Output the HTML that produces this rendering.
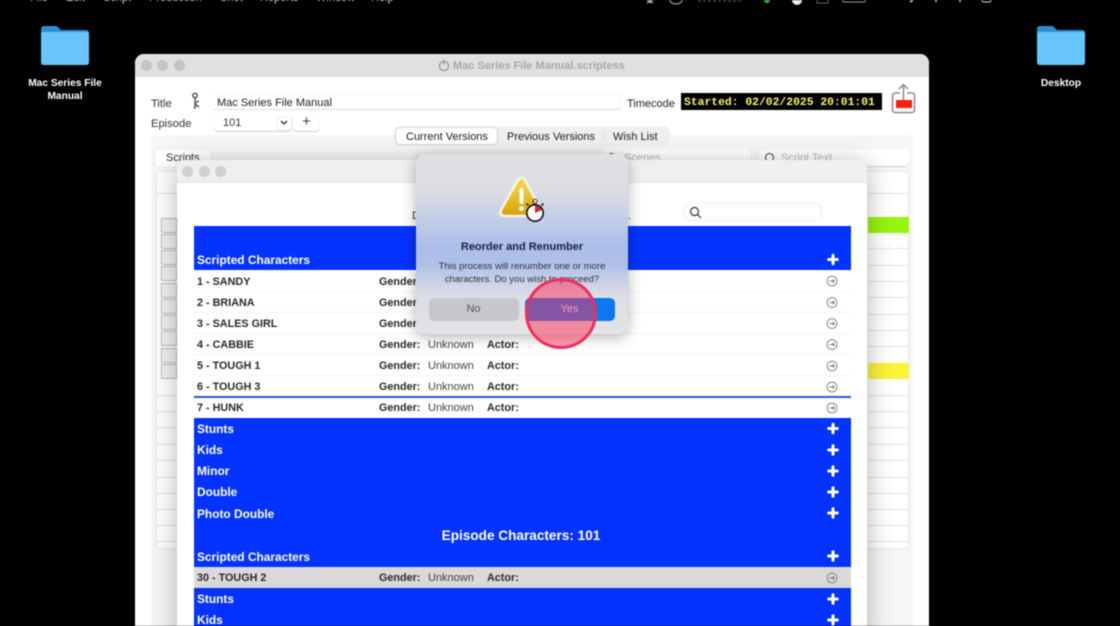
<!DOCTYPE html>
<html><head><meta charset="utf-8">
<style>
*{box-sizing:border-box}
html,body{margin:0;padding:0;width:1120px;height:626px;overflow:hidden;background:#000;font-family:"Liberation Sans",sans-serif;color:#222}
#w{position:absolute;left:0;top:0;width:1120px;height:626px;overflow:hidden;filter:blur(.45px)}
.a{position:absolute}
.t{position:absolute;white-space:nowrap;line-height:14px}
.dot{position:absolute;width:11px;height:11px;border-radius:50%}
.lbl{color:#fff;font-weight:bold;font-size:10.2px;text-align:center;line-height:13px}
.bk{font-weight:bold;font-size:10.8px;color:#2a2a2a}
.wb{font-weight:bold;font-size:11.9px;color:#fff}
.un{font-size:11px;color:#444}
.br{position:absolute;left:157px;width:20px;height:1px;background:#e2e2e2}
.r{position:absolute;left:868px;width:41px;height:1px;background:#e2e2e2}
.cb{position:absolute;left:161px;width:16px;height:15px;border:1px solid #bbb;background:#f0f0f0}
.m{position:absolute;top:-9px;font-size:11px;color:#ddd;line-height:14px;white-space:nowrap}
</style></head><body><div id="w">
<div class="m" style="left:30px">File</div><div class="m" style="left:66px">Edit</div><div class="m" style="left:103px">Script</div><div class="m" style="left:149px">Production</div><div class="m" style="left:220px">Shot</div><div class="m" style="left:260px">Reports</div><div class="m" style="left:316px">Window</div><div class="m" style="left:371px">Help</div>
<svg class="a" style="left:640px;top:0" width="370" height="5" viewBox="0 0 370 5" fill="none"><path d="M10 0V3M7 0L13 3M13 0L7 3" stroke="#ddd"/><path d="M30 0A6 4 0 0 0 42 0" stroke="#bbb"/><path d="M58 1H102" stroke="#666" stroke-dasharray="3 2"/><circle cx="127" cy="0" r="3" fill="#3b3"/><circle cx="157" cy="0" r="5" fill="#eee"/><rect x="177" y="-3" width="11" height="6" fill="none" stroke="#666"/><rect x="203" y="-3" width="22" height="5" rx="1" stroke="#999"/><path d="M270 2L273 0M296 2V0M320 2V0" stroke="#ddd" stroke-width="1.500"/><rect x="342" y="-3" width="9" height="5" rx="2" stroke="#ddd"/></svg>
<svg class="a" style="left:41px;top:25px" width="48" height="41" viewBox="0 0 48 41"><path d="M0 4Q0 1 3 1H14Q16 1 18 3L20 5H45Q48 5 48 8V20H0Z" fill="#2a8fd2"/><path d="M0 9Q0 7 3 7H45Q48 7 48 9V37Q48 40 45 40H3Q0 40 0 37Z" fill="#68c5fa"/></svg>
<div class="a lbl" style="left:20px;top:77px;width:90px">Mac Series File<br>Manual</div>
<svg class="a" style="left:1037px;top:25px" width="48" height="41" viewBox="0 0 48 41"><path d="M0 4Q0 1 3 1H14Q16 1 18 3L20 5H45Q48 5 48 8V20H0Z" fill="#2a8fd2"/><path d="M0 9Q0 7 3 7H45Q48 7 48 9V37Q48 40 45 40H3Q0 40 0 37Z" fill="#68c5fa"/></svg>
<div class="a lbl" style="left:1021px;top:77px;width:80px">Desktop</div>
<div class="a" style="left:135px;top:54px;width:794px;height:572px;background:#fff;border-radius:9px 9px 0 0;overflow:hidden">
  <div class="a" style="left:0;top:0;width:794px;height:23px;background:#e0e0e0"></div>
</div>
<div class="dot" style="left:141px;top:60px;background:#c4c4c4"></div>
<div class="dot" style="left:157px;top:60px;background:#c4c4c4"></div>
<div class="dot" style="left:174px;top:60px;background:#c4c4c4"></div>
<svg class="a" style="left:438px;top:58px" width="12" height="14" viewBox="0 0 12 14" fill="none" stroke="#999" stroke-width="1.300"><circle cx="6" cy="8" r="4.600"/><path d="M5 1.500L6 3.500V7"/></svg>
<div class="t" style="left:453px;top:59px;font-weight:bold;font-size:11px;color:#a8a8a8">Mac Series File Manual.scriptess</div>
<div class="t" style="left:151px;top:97px;font-size:11.2px;color:#333">Title</div>
<div class="t" style="left:151px;top:117px;font-size:11.2px;color:#333">Episode</div>
<svg class="a" style="left:191px;top:92px" width="10" height="18" viewBox="0 0 10 18" fill="none" stroke="#555" stroke-width="1.500"><circle cx="4" cy="3.500" r="2.200"/><path d="M4 6V17M4 11L8 9M4 12L8 15"/></svg>
<div class="a" style="left:214px;top:94px;width:406px;height:16px;border-bottom:1px solid #ddd;border-right:1px solid #f0f0f0;border-top:1px solid #f6f6f6"></div>
<div class="t" style="left:217px;top:96px;font-size:11px;color:#222">Mac Series File Manual</div>
<div class="t" style="left:627px;top:97px;font-size:11px;color:#222">Timecode</div>
<div class="a" style="left:681px;top:93px;width:201px;height:17px;background:#000"></div>
<div class="t" style="left:684px;top:96px;font-family:'Liberation Mono',monospace;font-weight:bold;font-size:11.37px;color:#fdf75a">Started: 02/02/2025 20:01:01</div>
<svg class="a" style="left:891px;top:83px" width="25" height="31" viewBox="0 0 25 31" fill="none"><rect x="1.500" y="10" width="22" height="19.500" rx="2.500" stroke="#8a8a8a" stroke-width="1.500"/><rect x="5" y="17" width="16" height="8" fill="#f6200c"/><rect x="9" y="6" width="7" height="6" fill="#fff"/><path d="M12.500 17V1.500M8 6L12.500 1.500L17 6" stroke="#8a8a8a" stroke-width="1.500"/></svg>
<div class="a" style="left:214px;top:114px;width:78px;height:17px;background:#fff;border-radius:4px;box-shadow:0 1px 1px rgba(0,0,0,.2)"></div>
<div class="t" style="left:223px;top:116px;font-size:11px;color:#333">101</div>
<div class="a" style="left:277px;top:117px;width:14px;height:13px;background:#fff;border-radius:3px;box-shadow:0 0 1px rgba(0,0,0,.4)"></div>
<svg class="a" style="left:280px;top:120px" width="8" height="6" viewBox="0 0 8 6" fill="none" stroke="#333" stroke-width="1.300"><path d="M1 1L4 4L7 1"/></svg>
<div class="a" style="left:293px;top:114px;width:26px;height:17px;background:#fff;border-radius:4px;box-shadow:0 1px 1px rgba(0,0,0,.2)"></div>
<div class="t" style="left:302px;top:115px;font-size:15px;color:#444">+</div>
<div class="a" style="left:151px;top:135px;width:762px;height:491px;background:#f6f6f6;border-radius:5px 5px 0 0"></div>
<div class="a" style="left:395px;top:127px;width:274px;height:18px;background:#efefef;border-radius:5px;box-shadow:0 0 1px rgba(0,0,0,.2)"></div>
<div class="a" style="left:396px;top:128px;width:101px;height:16px;background:#fff;border-radius:4px;box-shadow:0 0 2px rgba(0,0,0,.3)"></div>
<div class="t" style="left:406px;top:130px;font-size:11px;color:#222">Current Versions</div>
<div class="t" style="left:507px;top:130px;font-size:11px;color:#222">Previous Versions</div>
<div class="a" style="left:603px;top:131px;width:1px;height:10px;background:#ddd"></div>
<div class="t" style="left:613px;top:130px;font-size:11px;color:#222">Wish List</div>
<div class="a" style="left:155px;top:149px;width:56px;height:18px;background:#fff;border-radius:4px;box-shadow:0 0 1px rgba(0,0,0,.3)"></div>
<div class="t" style="left:166px;top:151px;font-size:11px;color:#333">Scripts</div>
<div class="a" style="left:602px;top:149px;width:149px;height:17px;background:#fff;border-radius:4px;box-shadow:0 1px 1px rgba(0,0,0,.15)"></div>
<div class="t" style="left:624px;top:151px;font-size:11px;color:#bbb">Scenes</div>
<div class="a" style="left:759px;top:149px;width:150px;height:17px;background:#fff;border-radius:4px;box-shadow:0 1px 1px rgba(0,0,0,.15)"></div>
<div class="t" style="left:781px;top:151px;font-size:11px;color:#bbb">Script Text</div>
<svg class="a" style="left:764px;top:152px" width="12" height="12" viewBox="0 0 12 12" fill="none" stroke="#444" stroke-width="1.100"><circle cx="5.500" cy="5.500" r="4"/></svg>
<svg class="a" style="left:606px;top:152px" width="12" height="12" viewBox="0 0 12 12" fill="none" stroke="#444" stroke-width="1.100"><circle cx="5.500" cy="5.500" r="4"/></svg>
<div class="a" style="left:156px;top:171px;width:753px;height:378px;background:#fff;border:1px solid #e6e6e6"></div>
<div class="br" style="top:193px"></div><div class="br" style="top:395px"></div><div class="br" style="top:411px"></div><div class="br" style="top:427px"></div><div class="br" style="top:444px"></div><div class="br" style="top:460px"></div><div class="br" style="top:477px"></div><div class="br" style="top:493px"></div><div class="br" style="top:509px"></div><div class="br" style="top:525px"></div><div class="br" style="top:541px"></div>
<div class="cb" style="top:218px"></div><div class="cb" style="top:234px"></div><div class="cb" style="top:250px"></div><div class="cb" style="top:266px"></div><div class="cb" style="top:283px"></div><div class="cb" style="top:299px"></div><div class="cb" style="top:315px"></div><div class="cb" style="top:331px"></div><div class="cb" style="top:348px"></div><div class="cb" style="top:364px"></div>
<div class="r" style="top:193px"></div><div class="r" style="top:248px"></div><div class="r" style="top:265px"></div><div class="r" style="top:281px"></div><div class="r" style="top:297px"></div><div class="r" style="top:314px"></div><div class="r" style="top:330px"></div><div class="r" style="top:346px"></div><div class="r" style="top:395px"></div><div class="r" style="top:411px"></div><div class="r" style="top:427px"></div><div class="r" style="top:444px"></div><div class="r" style="top:460px"></div><div class="r" style="top:477px"></div><div class="r" style="top:493px"></div><div class="r" style="top:509px"></div><div class="r" style="top:525px"></div><div class="r" style="top:541px"></div>
<div class="a" style="left:868px;top:217px;width:41px;height:16px;background:#97f50c"></div>
<div class="a" style="left:868px;top:363px;width:41px;height:16px;background:#f9f33a"></div>
<div class="a" style="left:177px;top:160px;width:690px;height:480px;background:#fff;border-radius:8px 8px 0 0;box-shadow:0 4px 26px rgba(0,0,0,.3)">
  <div class="a" style="left:0;top:0;width:690px;height:23px;background:#efefef;border-radius:8px 8px 0 0;border-bottom:1px solid #e4e4e4"></div>
</div>
<div class="dot" style="left:182px;top:166px;background:#cfcfcf"></div>
<div class="dot" style="left:199px;top:166px;background:#cfcfcf"></div>
<div class="dot" style="left:215px;top:166px;background:#cfcfcf"></div>
<div class="t" style="left:412px;top:209px;font-size:11px;color:#333">D</div>
<div class="t" style="left:628px;top:209px;font-size:11px;color:#333">.</div>
<div class="a" style="left:685px;top:204px;width:136px;height:16px;background:#fff;border-radius:5px;box-shadow:0 0 2px rgba(0,0,0,.2)"></div>
<svg class="a" style="left:689px;top:206px" width="13" height="13" viewBox="0 0 13 13" fill="none" stroke="#333" stroke-width="1.200"><circle cx="5.500" cy="5.500" r="4"/><path d="M8.500 8.500L12 12"/></svg>
<div class="a" style="left:194px;top:226px;width:657px;height:44px;background:#0433ff"></div>
<div class="a" style="left:194px;top:396px;width:657px;height:2px;background:#1c5fd0"></div>
<div class="a" style="left:194px;top:418px;width:657px;height:149px;background:#0433ff"></div>
<div class="a" style="left:194px;top:567px;width:657px;height:21px;background:#d9d9d9"></div>
<div class="a" style="left:194px;top:588px;width:657px;height:38px;background:#0433ff"></div>
<div class="a" style="left:194px;top:291px;width:657px;border-top:1px dotted #e8e8e8"></div>
<div class="a" style="left:194px;top:312px;width:657px;border-top:1px dotted #e8e8e8"></div>
<div class="a" style="left:194px;top:333px;width:657px;border-top:1px dotted #e8e8e8"></div>
<div class="a" style="left:194px;top:354px;width:657px;border-top:1px dotted #e8e8e8"></div>
<div class="a" style="left:194px;top:375px;width:657px;border-top:1px dotted #e8e8e8"></div>
<div class="t wb" style="left:197px;top:253px">Scripted Characters</div>
<div class="t bk" style="left:197px;top:275px">1 - SANDY</div>
<div class="t bk" style="left:197px;top:296px">2 - BRIANA</div>
<div class="t bk" style="left:197px;top:317px">3 - SALES GIRL</div>
<div class="t bk" style="left:197px;top:338px">4 - CABBIE</div>
<div class="t bk" style="left:197px;top:359px">5 - TOUGH 1</div>
<div class="t bk" style="left:197px;top:380px">6 - TOUGH 3</div>
<div class="t bk" style="left:197px;top:401px">7 - HUNK</div>
<div class="t bk" style="left:379px;top:275px">Gender:</div>
<div class="t bk" style="left:379px;top:296px">Gender:</div>
<div class="t bk" style="left:379px;top:317px">Gender:</div>
<div class="t bk" style="left:379px;top:338px">Gender:</div>
<div class="t bk" style="left:379px;top:359px">Gender:</div>
<div class="t bk" style="left:379px;top:380px">Gender:</div>
<div class="t bk" style="left:379px;top:401px">Gender:</div>
<div class="t un" style="left:428px;top:338px">Unknown</div>
<div class="t un" style="left:428px;top:359px">Unknown</div>
<div class="t un" style="left:428px;top:380px">Unknown</div>
<div class="t un" style="left:428px;top:401px">Unknown</div>
<div class="t bk" style="left:487px;top:338px">Actor:</div>
<div class="t bk" style="left:487px;top:359px">Actor:</div>
<div class="t bk" style="left:487px;top:380px">Actor:</div>
<div class="t bk" style="left:487px;top:401px">Actor:</div>
<div class="t wb" style="left:197px;top:422px">Stunts</div>
<div class="t wb" style="left:197px;top:443px">Kids</div>
<div class="t wb" style="left:197px;top:464px">Minor</div>
<div class="t wb" style="left:197px;top:485px">Double</div>
<div class="t wb" style="left:197px;top:507px">Photo Double</div>
<div class="t" style="left:194px;top:529px;width:654px;text-align:center;font-weight:bold;font-size:13.6px;color:#fff">Episode Characters: 101</div>
<div class="t wb" style="left:197px;top:550px">Scripted Characters</div>
<div class="t bk" style="left:197px;top:571px">30 - TOUGH 2</div>
<div class="t bk" style="left:379px;top:571px">Gender:</div>
<div class="t un" style="left:428px;top:571px">Unknown</div>
<div class="t bk" style="left:487px;top:571px">Actor:</div>
<div class="t wb" style="left:197px;top:592px">Stunts</div>
<div class="t wb" style="left:197px;top:613px">Kids</div>
<svg class="a" style="left:0;top:0" width="1120" height="626" fill="none">
<defs><g id="p"><path d="M0-4.300V4.300M-4.300 0H4.300" stroke="#fff" stroke-width="3" stroke-linecap="round"/></g>
<g id="g"><circle r="4.900" stroke="#888" stroke-width="1"/><path d="M-2.600 0H2.400M.6-1.800L2.400 0L.6 1.800" stroke="#777" stroke-width=".9"/></g></defs>
<use href="#p" x="833" y="259.500"/><use href="#p" x="833" y="428.500"/><use href="#p" x="833" y="450"/><use href="#p" x="833" y="471"/><use href="#p" x="833" y="492"/><use href="#p" x="833" y="513"/><use href="#p" x="833" y="556"/><use href="#p" x="833" y="599"/><use href="#p" x="833" y="620"/>
<use href="#g" x="832" y="281"/><use href="#g" x="832" y="302.500"/><use href="#g" x="832" y="323.500"/><use href="#g" x="832" y="344.500"/><use href="#g" x="832" y="366"/><use href="#g" x="832" y="387"/><use href="#g" x="832" y="408"/><use href="#g" x="832" y="578"/>
</svg>
<div class="a" style="left:416px;top:154px;width:212px;height:180px;border-radius:10px;background:linear-gradient(180deg,#e1e1e4 0%,#dcdde3 20%,#c8d1e8 33%,#abbde8 52%,#b1c1e8 62%,#dcdee6 78%,#e4e4e6 100%);box-shadow:0 3px 14px rgba(0,0,0,.3)"></div>
<svg class="a" style="left:497px;top:174px" width="50" height="50" viewBox="0 0 50 50"><defs><linearGradient id="y" x1="0" y1="0" x2="0" y2="1"><stop offset="0" stop-color="#f8dd55"/><stop offset="1" stop-color="#d8a208"/></linearGradient></defs><path d="M21 6Q24.500 1 28 6L44 36Q46 42 40 42H8Q2 42 4 36Z" fill="url(#y)" stroke="#f6f3ea" stroke-width="2.500" stroke-linejoin="round"/><rect x="22.500" y="14" width="4" height="16" rx="2" fill="#fff"/><circle cx="24.500" cy="34.500" r="2.300" fill="#fff"/><circle cx="38" cy="39" r="8.200" fill="#fff" stroke="#111" stroke-width="1.600"/><path d="M38 39V31.500A7.500 7.500 0 0 1 45 36Z" fill="#d12c2c"/><circle cx="38" cy="27.500" r="2.200" fill="none" stroke="#333" stroke-width="1"/><path d="M31.500 31.500l-2-2M44.500 31.500l2-2" stroke="#111" stroke-width="1.500"/></svg>
<div class="t" style="left:416px;top:240px;width:212px;text-align:center;font-weight:bold;font-size:11px;color:#1a2340">Reorder and Renumber</div>
<div class="t" style="left:416px;top:260px;width:212px;text-align:center;font-size:9.500px;line-height:13px;color:#333;white-space:normal;padding:0 18px">This process will renumber one or more characters. Do you wish to proceed?</div>
<div class="a" style="left:429px;top:298px;width:90px;height:23px;background:#c6c7ca;border-radius:5px"></div>
<div class="t" style="left:429px;top:302px;width:89px;text-align:center;font-size:11px;color:#555">No</div>
<div class="a" style="left:525px;top:298px;width:90px;height:23px;background:#0a78f0;border-radius:5px"></div>
<div class="t" style="left:525px;top:302px;width:89px;text-align:center;font-size:11px;color:#fff">Yes</div>
<div class="a" style="left:525px;top:278px;width:72px;height:71px;border-radius:50%;background:rgba(255,50,90,.5);border:3px solid #ee2f5e"></div>
</div></body></html>
